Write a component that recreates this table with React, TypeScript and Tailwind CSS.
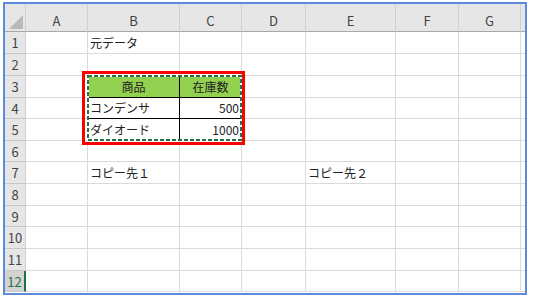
import React from 'react'

const FONT = { fontFamily: '"Noto Sans CJK JP", "Noto Sans", sans-serif' }

const cols = ['A', 'B', 'C', 'D', 'E', 'F', 'G']
const colW = ['w-[62px]', 'w-[92px]', 'w-[62px]', 'w-[64px]', 'w-[90px]', 'w-[63px]', 'w-[62px]']
const rowH = [
  'h-[22px]', 'h-[22px]', 'h-[22px]', 'h-[21px]', 'h-[22px]', 'h-[21px]',
  'h-[22px]', 'h-[22px]', 'h-[21px]', 'h-[22px]', 'h-[22px]', 'h-[21px]',
]

type Cell = { text?: string; right?: boolean; center?: boolean; cls?: string }

// セルの内容と罫線
const cells: Record<string, Cell> = {
  B1: { text: '元データ' },
  B3: { text: '商品', center: true, cls: 'bg-[#92d050] border-r-black border-b-black' },
  C3: { text: '在庫数', center: true, cls: 'bg-[#92d050] border-b-black' },
  B4: { text: 'コンデンサ', cls: 'border-r-black border-b-black' },
  C4: { text: '500', right: true, cls: 'border-b-black' },
  B5: { text: 'ダイオード', cls: 'border-r-black' },
  C5: { text: '1000', right: true },
  B7: { text: 'コピー先１' },
  E7: { text: 'コピー先２' },
}

function Corner() {
  return (
    <div className="w-[21px] h-[28px] shrink-0 bg-[#e6e6e6] border-r border-b border-r-[#d0d0d0] border-b-[#a8a8a8] flex items-end justify-end pr-[2px] pb-[2px]">
      <svg width="14" height="14" viewBox="0 0 14 14">
        <path d="M14 0 L14 14 L0 14 Z" fill="#b9b9b9" />
      </svg>
    </div>
  )
}

export default function App() {
  return (
    <div className="w-[533px] h-[299px] bg-white pl-[3px] pt-[2px]" style={FONT}>
      <div className="relative w-[524px] h-[293px] border-2 border-[#5b8bd9] overflow-hidden">
        {/* 列見出し */}
        <div className="flex">
          <Corner />
          {cols.map((c, i) => (
            <div
              key={c}
              className={`${colW[i]} h-[28px] shrink-0 bg-[#e6e6e6] border-r border-b border-r-[#d0d0d0] border-b-[#a8a8a8] flex items-center justify-center pt-[6px] text-[13px] text-[#444]`}
            >
              {c}
            </div>
          ))}
          <div className="flex-1 h-[28px] bg-[#e6e6e6] border-b border-b-[#a8a8a8]" />
        </div>

        {/* 行 */}
        {rowH.map((h, r) => {
          const n = r + 1
          const active = n === 12
          return (
            <div key={n} className="flex">
              <div
                className={`w-[21px] ${h} shrink-0 border-b border-b-[#c8c8c8] flex items-center justify-center text-[13px] leading-none ${
                  active
                    ? 'bg-[#d2d2d2] text-[#217346] border-r-2 border-r-[#217346]'
                    : 'bg-[#e6e6e6] text-[#444] border-r border-r-[#d0d0d0]'
                }`}
              >
                {n}
              </div>
              {cols.map((c, i) => {
                const cell = cells[`${c}${n}`]
                return (
                  <div
                    key={c}
                    className={`${colW[i]} ${h} shrink-0 border-r border-b border-[#dadada] flex items-center px-[2px] text-[12px] leading-none text-[#222] whitespace-nowrap ${
                      cell?.right ? 'justify-end' : cell?.center ? 'justify-center' : 'justify-start'
                    } ${cell?.cls ?? ''}`}
                  >
                    {cell?.text}
                  </div>
                )
              })}
              <div className={`flex-1 ${h} border-b border-[#dadada]`} />
            </div>
          )
        })}

        {/* コピー範囲の点線 */}
        <svg className="absolute left-[82px] top-[71px]" width="155" height="66" viewBox="0 0 155 66">
          <rect x="1" y="1" width="153" height="64" fill="none" stroke="#ffffff" strokeWidth="2" />
          <rect x="1" y="1" width="153" height="64" fill="none" stroke="#217346" strokeWidth="2" strokeDasharray="4 2" />
        </svg>

        {/* 赤枠 */}
        <div className="absolute left-[77px] top-[67px] w-[163px] h-[74px] border-[3px] border-[#ff0000]" />
      </div>
    </div>
  )
}
